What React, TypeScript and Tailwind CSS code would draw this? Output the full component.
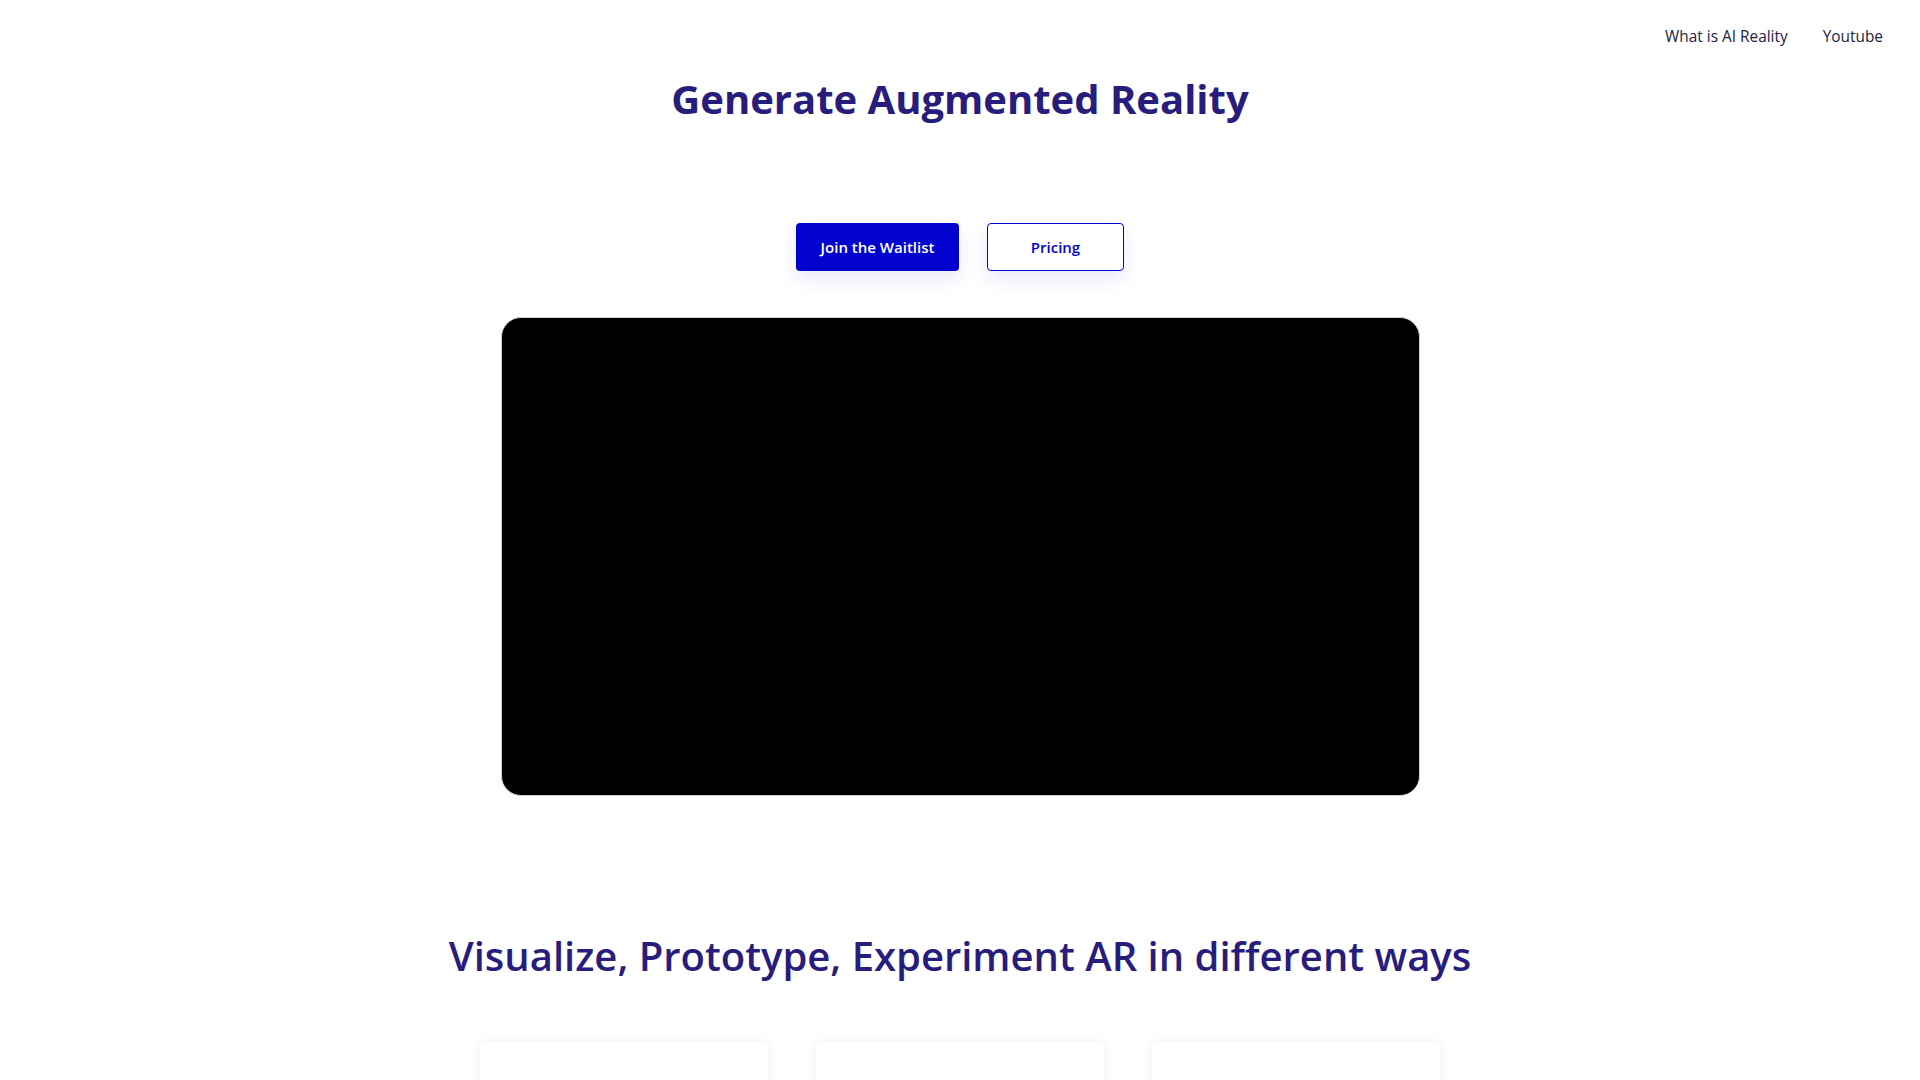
import React from "react";

// landing hero for the AR generator
const navLinks = ["What is AI Reality", "Youtube"];

function Header() {
  return (
    <header className="flex justify-end gap-[35px] pr-[37px] pt-[26px]">
      {navLinks.map((l) => (
        <a key={l} href="#" className="text-[15.4px] leading-[22px] text-[#1b1d44]">
          {l}
        </a>
      ))}
    </header>
  );
}

function Card() {
  return (
    <div className="h-[220px] w-[288px] rounded-md bg-white shadow-[0_0_14px_rgba(90,80,200,0.09)]" />
  );
}

export default function App() {
  return (
    <div className="min-h-screen bg-white font-['Open_Sans',sans-serif]">
      <Header />
      <main className="flex flex-col items-center">
        <h1 className="mt-[23px] text-[40px] font-bold leading-[56px] text-[#281d7c]">
          Generate Augmented Reality
        </h1>

        <div className="mt-[96px] flex gap-[28px]">
          <button className="h-12 w-[163px] rounded bg-[#0202cf] text-[15px] font-semibold text-white shadow-[0_8px_18px_rgba(40,40,200,0.10)]">
            Join the Waitlist
          </button>
          <button className="h-12 w-[137px] rounded border border-[#0202cf] bg-white text-[15px] font-semibold text-[#0202cf] shadow-[0_8px_18px_rgba(40,40,200,0.10)]">
            Pricing
          </button>
        </div>

        {/* video placeholder */}
        <div className="mt-[46px] h-[479px] w-[919px] rounded-[20px] border border-[#cfcfcf] bg-black" />

        <h2 className="mt-[133px] text-[40px] font-semibold leading-[54px] text-[#281d7c]">
          Visualize, Prototype, Experiment AR in different ways
        </h2>

        <div className="mt-[59px] flex gap-12">
          <Card />
          <Card />
          <Card />
        </div>
      </main>
    </div>
  );
}
